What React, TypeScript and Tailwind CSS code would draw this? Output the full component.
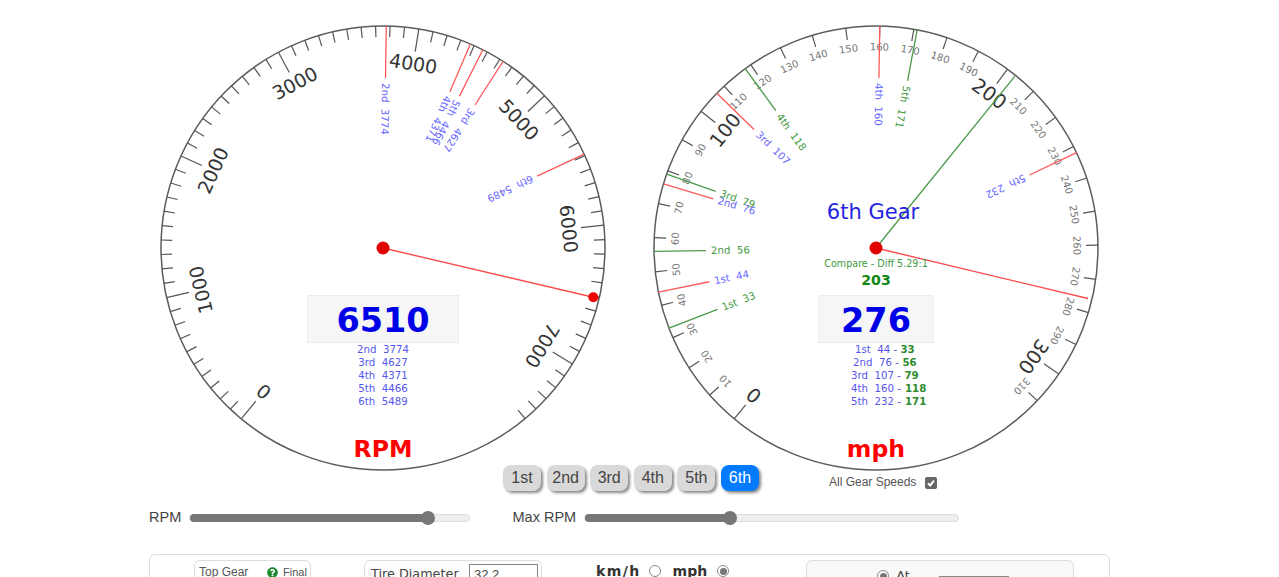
import { FaQuestionCircle } from 'react-icons/fa'

type Mark = { label: string; value: number; green?: boolean }
type ListRow = { label: string; value: number; compare?: number; compareX?: number }

const START = 219.7
const CX = 230
const CY = 230
const R = 222

const polar = (r: number, deg: number) => {
    const a = ((deg - 90) * Math.PI) / 180
    return { x: CX + r * Math.cos(a), y: CY + r * Math.sin(a) }
}

function GaugeTick({ deg, len }: { deg: number; len: number }) {
    const a = polar(R, deg)
    const b = polar(R - len, deg)
    return <line x1={a.x} y1={a.y} x2={b.x} y2={b.y} stroke="#555" strokeWidth="1.2" />
}

function TickLabel({ deg, r, size, color, text }: { deg: number; r: number; size: number; color: string; text: string }) {
    const p = polar(r, deg)
    return (
        <text x={p.x} y={p.y} fontSize={size} fill={color} textAnchor="middle" dominantBaseline="central" transform={`rotate(${deg} ${p.x} ${p.y})`}>
            {text}
        </text>
    )
}

function GearMark({ mark, step }: { mark: Mark; step: number }) {
    const deg = START + mark.value * step
    const a = polar(R, deg)
    const b = polar(R - 52, deg)
    const p = polar(R - 57, deg)
    return (
        <g>
            <line x1={a.x} y1={a.y} x2={b.x} y2={b.y} stroke={mark.green ? '#4a9a4a' : '#ff5a5a'} strokeWidth="1.3" />
            <text x={p.x} y={p.y} fontSize="10.2" fill={mark.green ? '#3f9a3f' : '#6666ff'} dominantBaseline="central" transform={`rotate(${deg + 90} ${p.x} ${p.y})`}>
                {mark.label}{'\u00a0\u00a0'}{mark.value}
            </text>
        </g>
    )
}

function ValueBox({ width, value, y }: { width: number; value: number; y: number }) {
    return (
        <g>
            <rect x={CX - width / 2} y="277.5" width={width} height="47" fill="#f6f6f6" stroke="#ececec" />
            <text x={CX} y={y} fontSize="33.5" fontWeight="700" fill="#0000e6" textAnchor="middle">{value}</text>
        </g>
    )
}

function GearList({ rows }: { rows: ListRow[] }) {
    return (
        <g>
            {rows.map((row, i) => (
                <g key={row.label}>
                    <text x={CX} y={334.5 + i * 13.2} fontSize="10.2" fill="#5555ee" textAnchor="middle">
                        {row.label}{'\u00a0\u00a0'}{row.value}{row.compare !== undefined && ' -'}
                    </text>
                    {/* the blue part stays centred, the green figure hangs off its end */}
                    {row.compare !== undefined && (
                        <text x={CX + (row.compareX ?? 0)} y={334.5 + i * 13.2} fontSize="10.2" fontWeight="700" fill="#2e8b2e">{row.compare}</text>
                    )}
                </g>
            ))}
        </g>
    )
}

function Dial({ children }: { children: React.ReactNode }) {
    return (
        <svg width="460" height="460" viewBox="0 0 460 460" className="shrink-0 font-['DejaVu_Sans',sans-serif]">
            <circle cx={CX} cy={CY} r={R} fill="none" stroke="#5c5c5c" strokeWidth="1.5" />
            {children}
        </svg>
    )
}

function RpmGauge() {
    const step = 0.0374
    const marks: Mark[] = [
        { label: '2nd', value: 3774 },
        { label: '3rd', value: 4627 },
        { label: '4th', value: 4371 },
        { label: '5th', value: 4466 },
        { label: '6th', value: 5489 },
    ]
    const needle = START + 6510 * step
    const tip = polar(216, needle)
    return (
        <Dial>
            {Array.from({ length: 76 }, (_, i) => (
                <GaugeTick key={i} deg={START + i * 100 * step} len={i % 10 === 0 ? 23 : 11} />
            ))}
            {[0, 1000, 2000, 3000, 4000, 5000, 6000, 7000].map((v) => (
                <TickLabel key={v} deg={START + v * step} r={187} size={19} color="#333" text={String(v)} />
            ))}
            {marks.map((m) => <GearMark key={m.label} mark={m} step={step} />)}
            <line x1={CX} y1={CY} x2={tip.x} y2={tip.y} stroke="#ff4d4d" strokeWidth="1.4" />
            <circle cx={tip.x} cy={tip.y} r="5" fill="#ee0000" />
            <circle cx={CX} cy={CY} r="6.5" fill="#e00000" />
            <ValueBox width={151} value={6510} y={313.5} />
            <GearList rows={marks.map((m) => ({ label: m.label, value: m.value }))} />
            <text x={CX} y="438.5" fontSize="23.6" fontWeight="700" fill="#ff0000" textAnchor="middle">RPM</text>
        </Dial>
    )
}

function SpeedGauge() {
    const step = 0.883
    const marks: Mark[] = [
        { label: '1st', value: 44 },
        { label: '2nd', value: 76 },
        { label: '3rd', value: 107 },
        { label: '4th', value: 160 },
        { label: '5th', value: 232 },
        { label: '1st', value: 33, green: true },
        { label: '2nd', value: 56, green: true },
        { label: '3rd', value: 79, green: true },
        { label: '4th', value: 118, green: true },
        { label: '5th', value: 171, green: true },
    ]
    const top = polar(221, START + 203 * step)
    const tip = polar(218, START + 276 * step)
    return (
        <Dial>
            {Array.from({ length: 32 }, (_, i) => (
                <GaugeTick key={i} deg={START + i * 10 * step} len={i % 10 === 0 ? 18 : 12} />
            ))}
            {Array.from({ length: 32 }, (_, i) => (
                i % 10 === 0
                    ? <TickLabel key={i} deg={START + i * 10 * step} r={191} size={19.5} color="#333" text={String(i * 10)} />
                    : <TickLabel key={i} deg={START + i * 10 * step} r={201} size={10} color="#777" text={String(i * 10)} />
            ))}
            {marks.map((m) => <GearMark key={m.label + m.value} mark={m} step={step} />)}
            <line x1={CX} y1={CY} x2={top.x} y2={top.y} stroke="#4a9a4a" strokeWidth="1.3" />
            <line x1={CX} y1={CY} x2={tip.x} y2={tip.y} stroke="#ff4d4d" strokeWidth="1.4" />
            <circle cx={CX} cy={CY} r="6.5" fill="#e00000" />
            <text x={CX - 3} y="201" fontSize="21" fill="#2525dd" textAnchor="middle">6th Gear</text>
            <text x={CX} y="249" fontSize="9.6" fill="#3f9a3f" textAnchor="middle">Compare - Diff 5.29:1</text>
            <text x={CX} y="266.5" fontSize="14.2" fontWeight="700" fill="#118811" textAnchor="middle">203</text>
            <ValueBox width={114} value={276} y={313.5} />
            <GearList
                rows={[
                    { label: '1st', value: 44, compare: 33, compareX: 24.5 },
                    { label: '2nd', value: 76, compare: 56, compareX: 26.5 },
                    { label: '3rd', value: 107, compare: 79, compareX: 28.5 },
                    { label: '4th', value: 160, compare: 118, compareX: 29 },
                    { label: '5th', value: 232, compare: 171, compareX: 29 },
                ]}
            />
            <text x={CX} y="438.5" fontSize="23.6" fontWeight="700" fill="#ff0000" textAnchor="middle">mph</text>
        </Dial>
    )
}

function GearButton({ label, active }: { label: string; active?: boolean }) {
    return (
        <button className={`w-[38px] h-[26px] rounded-lg text-base leading-[24px] shadow-[2px_2px_3px_#888] ${active ? 'bg-[#007bff] text-white' : 'bg-[#d9d9d9] text-[#444]'}`}>
            {label}
        </button>
    )
}

function Radio({ checked }: { checked?: boolean }) {
    return (
        <span className="flex size-3 shrink-0 items-center justify-center rounded-full border border-[#8a8a8a] bg-white">
            {checked && <span className="size-[7px] rounded-full bg-[#777]" />}
        </span>
    )
}

export default function App() {
    return (
        <div className="h-[577px] w-[1279px] overflow-hidden bg-white font-['Liberation_Sans',Arial,sans-serif] text-[#444]">
            <div className="flex gap-[33px] pl-[153px] pt-[17.5px]">
                <RpmGauge />
                <SpeedGauge />
            </div>

            {/* the gear buttons sit in the gap under the two dials */}
            <div className="relative -mt-[12.5px] flex items-start pl-[503px]">
                <div className="flex gap-[5.6px]">
                    <GearButton label="1st" />
                    <GearButton label="2nd" />
                    <GearButton label="3rd" />
                    <GearButton label="4th" />
                    <GearButton label="5th" />
                    <GearButton label="6th" active />
                </div>
                <div className="ml-[70px] mt-[9px] flex items-center text-xs text-[#555]">
                    <span className="w-[96px]">All Gear Speeds</span>
                    <span className="mt-[2px] flex size-[12.5px] items-center justify-center rounded-[2px] bg-[#666]">
                        <svg width="10" height="10" viewBox="0 0 10 10" fill="none" stroke="white" strokeWidth="2">
                            <path d="M2 5.2 4.2 7.4 8 2.6" />
                        </svg>
                    </span>
                </div>
            </div>

            <div className="mt-[19px] flex h-[16px] items-center pl-[149px] text-[14.5px]">
                <span className="w-[39.5px]">RPM</span>
                <div className="flex h-2 w-[281px] items-center rounded-full border border-[#ddd] bg-[#eee]">
                    <div className="h-2 w-[238px] rounded-full bg-[#777]" />
                    <div className="-ml-[7px] size-[14px] rounded-full bg-[#777]" />
                </div>
                <span className="ml-[43px] w-[71px]">Max RPM</span>
                <div className="flex h-2 w-[375px] items-center rounded-full border border-[#ddd] bg-[#eee]">
                    <div className="h-2 w-[145px] rounded-full bg-[#777]" />
                    <div className="-ml-[7px] size-[14px] rounded-full bg-[#777]" />
                </div>
            </div>

            <div className="ml-[149px] mt-[28px] flex h-[60px] w-[961px] items-start rounded-md border border-[#ddd] pl-[44px] pt-[5px]">
                <div className="flex h-[40px] w-[117px] items-start rounded-md border border-[#ddd] pl-[4px] pt-[4px] text-[12px] leading-[14px] text-[#555]">
                    <span className="w-[68px]">Top Gear</span>
                    <FaQuestionCircle className="mt-[2px] size-[11px] text-[#1a8a2e]" />
                    <span className="ml-[5px] text-[11px]">Final</span>
                </div>
                <div className="ml-[53px] flex h-[40px] w-[178px] items-start rounded-md border border-[#ddd] bg-[#fdfdfd] pl-[6px] pt-[3px] font-['DejaVu_Sans',sans-serif] text-[12.8px] leading-[15px] text-[#444]">
                    <span className="mt-[2px] w-[98px]">Tire Diameter</span>
                    <span className="h-[24px] w-[69px] border border-[#888] bg-white pl-[4px] font-['Liberation_Sans',sans-serif] text-[13px] leading-[20px]">32.2</span>
                </div>
                <div className="ml-[54px] mt-[1px] flex items-center font-['DejaVu_Sans',sans-serif] text-sm font-bold text-[#333]">
                    <span className="tracking-[1.4px]">km/h</span>
                    <span className="ml-[8px]"><Radio /></span>
                    <span className="ml-[12px]">mph</span>
                    <span className="ml-[10px]"><Radio checked /></span>
                </div>
                <div className="ml-[77px] flex h-[40px] w-[268px] items-start rounded-md border border-[#ddd] bg-[#f9f9f9] pl-[70px] pt-[9px]">
                    <Radio checked />
                    <span className="ml-[7px] font-['DejaVu_Sans',sans-serif] text-[13px] leading-[12px]">At</span>
                    <span className="ml-[29px] mt-[6px] h-[20px] w-[70px] border border-[#888] bg-white" />
                </div>
            </div>
        </div>
    )
}
